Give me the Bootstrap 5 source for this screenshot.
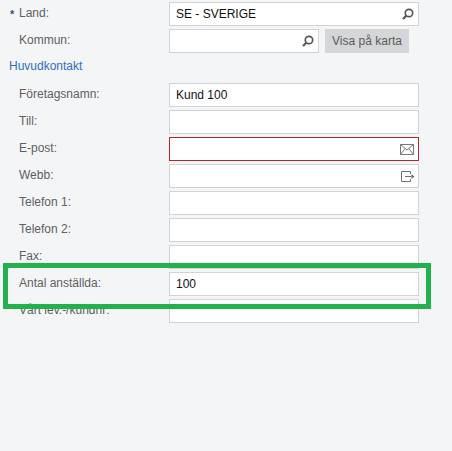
<!DOCTYPE html>
<html lang="sv">
<head>
<meta charset="utf-8">
<title>Kund</title>
<link href="https://cdn.jsdelivr.net/npm/bootstrap@5.3.0/dist/css/bootstrap.min.css" rel="stylesheet">
<style>
html, body { height: 100%; }
body { background: #f4f5f7; font-family: "Liberation Sans", Arial, sans-serif; font-size: 12px; color: #5f5f5f; overflow: hidden; }
.page-wrap { padding: 2px 0 0 0; position: relative; height: 100%; }
.frow { height: 24px; margin-bottom: 3px; }
.flabel { width: 169px; padding-left: 19px; position: relative; line-height: 22px; align-self: flex-start; }
.req { position: absolute; left: 10px; top: 1px; color: #39536b; font-weight: 700; font-size: 11px; }
.fbox { width: 250px; height: 24px; border: 1px solid #d2d3d6; background: #fff; padding: 0 6px; line-height: 22px; color: #111; font-size: 12px; position: relative; }
.fbox.short { width: 150px; }
.fbox.invalid { border-color: #a92a2a; }
.fico { position: absolute; right: 3px; top: 4px; width: 14px; height: 14px; }
.fico-wide { position: absolute; top: 6px; width: 14px; height: 11px; }
.fico-env { right: 4px; }
.fico-web { right: 3px; }
.mapbtn { margin-left: 6px; width: 84px; height: 24px; background: #d5d6d8; color: #5c5c5c; font-size: 12px; line-height: 24px; padding: 0; border: 0; border-radius: 0; text-align: center; }
.section { height: 24px; line-height: 20px; padding-left: 9px; margin-bottom: 3px; color: #2f6fbf; }
.hilite { position: absolute; left: 3px; top: 263px; width: 428px; height: 46px; border: 5px solid #22b14c; }
</style>
</head>
<body>
<div class="page-wrap">
  <div class="frow d-flex"><div class="flabel"><span class="req">*</span>Land:</div>
    <div class="fbox">SE - SVERIGE
      <svg class="fico" viewBox="0 0 14 14"><circle cx="8" cy="6" r="3.7" fill="none" stroke="#555" stroke-width="1.7"/><path d="M5.3 8.8 2 12" stroke="#555" stroke-width="2.2"/></svg>
    </div></div>
  <div class="frow d-flex"><div class="flabel">Kommun:</div>
    <div class="fbox short">
      <svg class="fico" viewBox="0 0 14 14"><circle cx="8" cy="6" r="3.7" fill="none" stroke="#555" stroke-width="1.7"/><path d="M5.3 8.8 2 12" stroke="#555" stroke-width="2.2"/></svg>
    </div>
    <button type="button" class="btn mapbtn">Visa på karta</button></div>
  <div class="section">Huvudkontakt</div>
  <div class="frow d-flex"><div class="flabel">Företagsnamn:</div><div class="fbox">Kund 100</div></div>
  <div class="frow d-flex"><div class="flabel">Till:</div><div class="fbox"></div></div>
  <div class="frow d-flex"><div class="flabel">E-post:</div>
    <div class="fbox invalid">
      <svg class="fico-wide fico-env" viewBox="0 0 14 11"><path d="M.5.5h13v10H.5zM.5.5 7 6l6.500-5.500M.5 10.500 5.200 4.500M13.500 10.500 8.800 4.500" fill="none" stroke="#777"/></svg>
    </div></div>
  <div class="frow d-flex"><div class="flabel">Webb:</div>
    <div class="fbox">
      <svg class="fico-wide fico-web" viewBox="0 0 14 11"><path d="M9.500 3V.5H.5v10h9V8M4 5.500h6.500" fill="none" stroke="#707070"/><path d="M10.500 3l3 2.500-3 2.500z" fill="#707070"/></svg>
    </div></div>
  <div class="frow d-flex"><div class="flabel">Telefon 1:</div><div class="fbox"></div></div>
  <div class="frow d-flex"><div class="flabel">Telefon 2:</div><div class="fbox"></div></div>
  <div class="frow d-flex"><div class="flabel">Fax:</div><div class="fbox"></div></div>
  <div class="frow d-flex"><div class="flabel">Antal anställda:</div><div class="fbox">100</div></div>
  <div class="frow d-flex"><div class="flabel">Vårt lev.-/kundnr:</div><div class="fbox"></div></div>
  <div class="hilite"></div>
</div>
<script src="https://cdn.jsdelivr.net/npm/bootstrap@5.3.0/dist/js/bootstrap.bundle.min.js"></script>
</body>
</html>
